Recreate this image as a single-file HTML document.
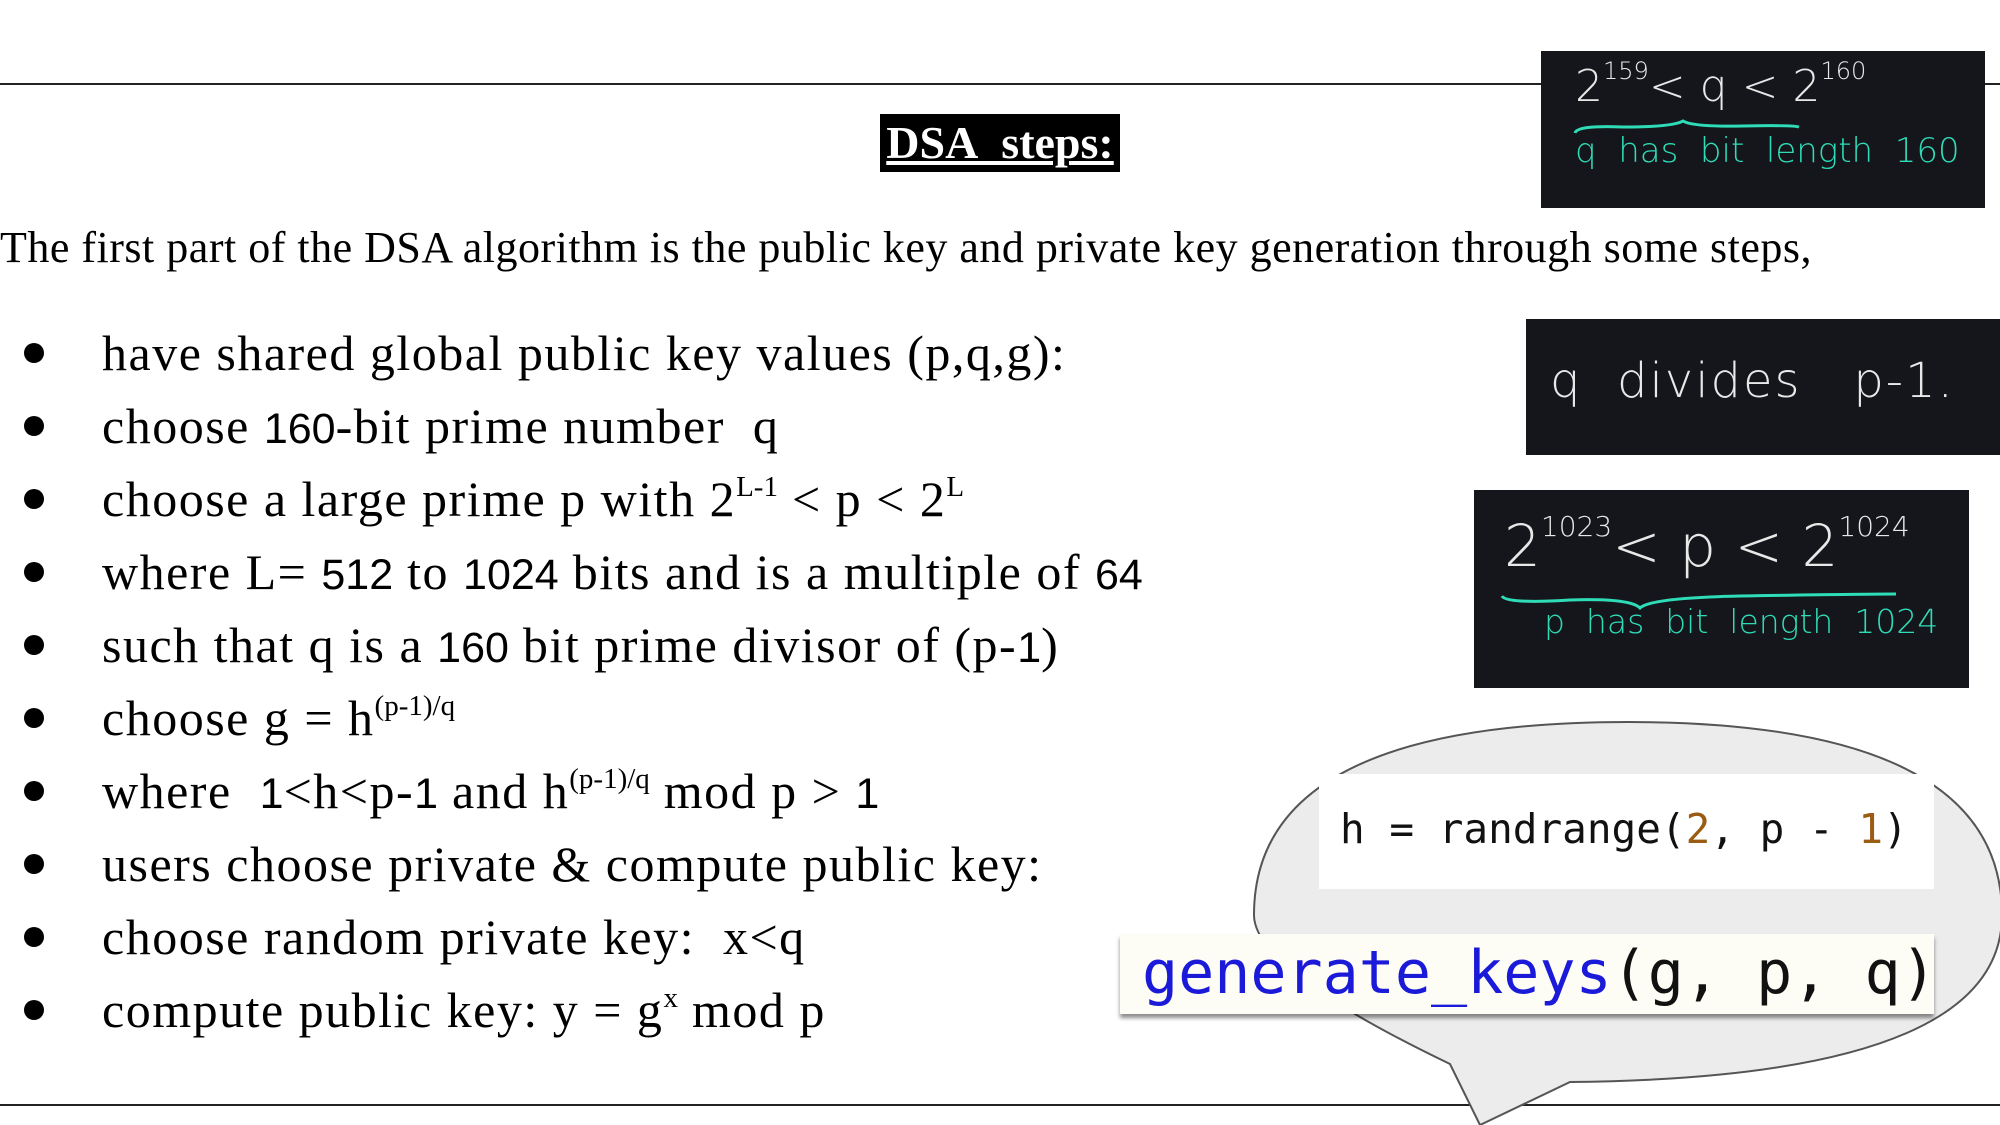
<!DOCTYPE html>
<html><head><meta charset="utf-8"><style>
body{margin:0;width:2000px;height:1125px;background:#fff;position:relative;overflow:hidden;font-family:"Liberation Serif",serif;color:#000}
.a{position:absolute;white-space:nowrap}
.hr{position:absolute;left:0;height:2px;background:#222}
.b{position:absolute;left:24px;width:20px;height:20px;border-radius:50%;background:#000}
.li{position:absolute;left:102px;font-size:50px;line-height:60px;white-space:nowrap;letter-spacing:1.5px}
.n{font-family:"Liberation Sans",sans-serif;font-size:43px;letter-spacing:0}
sup{font-size:29px;line-height:0;vertical-align:20px;letter-spacing:0}
.bd{position:absolute;background:#15161b;overflow:hidden}
.hw{position:absolute;font-family:"DejaVu Sans",sans-serif;white-space:nowrap;font-weight:300}
.t{color:#2fdcb8}
.w{color:#e8e8e8}
.mono{font-family:"DejaVu Sans Mono","Liberation Mono",monospace}
</style></head><body>
<div class="hr" style="top:83px;width:2000px"></div>
<div class="hr" style="top:1104px;width:2000px"></div>

<div class="a" style="left:880px;top:114px;width:240px;height:58px;background:#000;color:#fff;font-weight:bold;font-size:46px;line-height:58px;text-align:center;text-decoration:underline">DSA&nbsp; steps:</div>
<div class="a" style="left:880px;top:168px;width:240px;height:3px;background:#000"></div>

<div class="a" style="left:0;top:220px;font-size:44px;line-height:56px;letter-spacing:0.5px">The first part of the DSA algorithm is the public key and private key generation through some steps,</div>

<div class="b" style="top:343px"></div><div class="li" style="top:323px">have shared global public key values (p,q,g):</div>
<div class="b" style="top:416px"></div><div class="li" style="top:396px">choose <span class="n">160</span>-bit prime number&nbsp; q</div>
<div class="b" style="top:489px"></div><div class="li" style="top:469px">choose a large prime p with 2<sup>L-1</sup> &lt; p &lt; 2<sup>L</sup></div>
<div class="b" style="top:562px"></div><div class="li" style="top:542px">where L= <span class="n">512</span> to <span class="n">1024</span> bits and is a multiple of <span class="n">64</span></div>
<div class="b" style="top:635px"></div><div class="li" style="top:615px">such that q is a <span class="n">160</span> bit prime divisor of (p-<span class="n">1</span>)</div>
<div class="b" style="top:708px"></div><div class="li" style="top:688px">choose g = h<sup>(p-1)/q</sup></div>
<div class="b" style="top:781px"></div><div class="li" style="top:761px">where&nbsp; <span class="n">1</span>&lt;h&lt;p-<span class="n">1</span> and h<sup>(p-1)/q</sup> mod p &gt; <span class="n">1</span></div>
<div class="b" style="top:854px"></div><div class="li" style="top:834px">users choose private &amp; compute public key:</div>
<div class="b" style="top:927px"></div><div class="li" style="top:907px">choose random private key:&nbsp; x&lt;q</div>
<div class="b" style="top:1000px"></div><div class="li" style="top:980px">compute public key: y = g<sup>x</sup> mod p</div>

<!-- image 1 -->
<div class="bd" style="left:1541px;top:51px;width:444px;height:157px">
  <div class="hw w" style="left:34px;top:10px;font-size:44px">2<sup style="font-size:24px;vertical-align:22px">159</sup>&lt; q &lt; 2<sup style="font-size:24px;vertical-align:22px">160</sup></div>
  <svg class="a" style="left:32px;top:68px" width="230" height="20"><path d="M2 14 Q4 6 50 8 Q100 8 110 2 Q120 8 170 7 Q220 6 226 8" stroke="#2fdcb8" stroke-width="3" fill="none"/></svg>
  <div class="hw t" style="left:34px;top:80px;font-size:34px">q&nbsp; has&nbsp; bit&nbsp; length&nbsp; 160</div>
</div>
<!-- image 2 -->
<div class="bd" style="left:1526px;top:319px;width:474px;height:136px">
  <div class="hw w" style="left:24px;top:34px;font-size:48px;letter-spacing:2px">q&nbsp; divides&nbsp;&nbsp; p-1.</div>
</div>
<!-- image 3 -->
<div class="bd" style="left:1474px;top:490px;width:495px;height:198px">
  <div class="hw w" style="left:30px;top:22px;font-size:58px">2<sup style="font-size:28px;vertical-align:30px">1023</sup>&lt; p &lt; 2<sup style="font-size:28px;vertical-align:30px">1024</sup></div>
  <svg class="a" style="left:26px;top:98px" width="400" height="24"><path d="M2 8 Q6 16 70 12 Q130 10 140 20 Q150 10 240 8 Q360 6 396 6" stroke="#2fdcb8" stroke-width="3" fill="none"/></svg>
  <div class="hw t" style="left:70px;top:112px;font-size:33px">p&nbsp; has&nbsp; bit&nbsp; length&nbsp; 1024</div>
</div>

<!-- speech bubble -->
<svg class="a" style="left:0;top:0" width="2000" height="1125">
  <path d="M1450 1064 Q1254 970 1254 915 Q1254 722 1628 722 Q2002 722 2002 915 Q2002 1078 1570 1082 L1480 1125 Z" fill="#ececec" stroke="#555" stroke-width="2"/>
</svg>
<div class="a" style="left:1319px;top:774px;width:615px;height:115px;background:#fff"></div>
<div class="a mono" style="left:1340px;top:804px;font-size:41px;line-height:50px;color:#111">h = randrange(<span style="color:#9a5b12">2</span>, p - <span style="color:#9a5b12">1</span>)</div>
<div class="a" style="left:1120px;top:934px;width:814px;height:80px;background:#fdfdf6;box-shadow:0 4px 4px rgba(0,0,0,0.45)"></div>
<div class="a mono" style="left:1142px;top:938px;font-size:60px;line-height:70px;color:#1a1ad8">generate_keys<span style="color:#111">(g, p, q)</span></div>
</body></html>
